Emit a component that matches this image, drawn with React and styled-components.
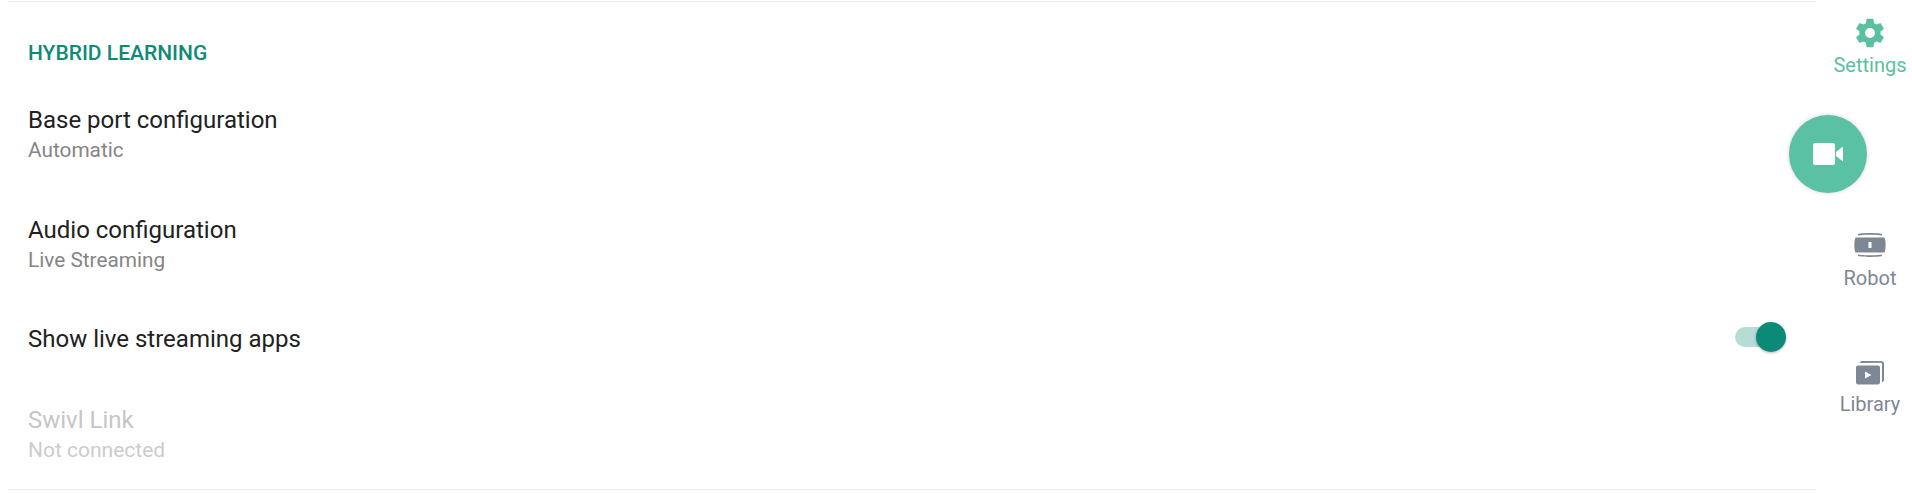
import React from 'react';
import styled, { createGlobalStyle } from 'styled-components';

const Global = createGlobalStyle`
  html, body { margin: 0; padding: 0; background: #fff; height: 493px; overflow: hidden; }
  * { box-sizing: border-box; }
  body { font-family: Roboto, "Noto Sans", sans-serif; }
`;

const Page = styled.div`
  display: flex;
  width: 1912px;
  height: 493px;
  position: relative;
  background: #fff;
`;

const Panel = styled.main`
  width: 1808px;
  height: 489px;
  margin-left: 8px;
  margin-top: 1px;
  padding: 0 20px;
  border-top: 1px solid #ececec;
  border-bottom: 1px solid #ececec;
  display: flex;
  flex-direction: column;
  flex-shrink: 0;
`;

const Heading = styled.h2`
  margin: 39px 0 14px;
  font-size: 21px;
  line-height: 24px;
  font-weight: 500;
  color: #0f8a75;
`;

const Row = styled.div`
  height: ${p => p.$h}px;
  padding-top: ${p => p.$pt || 0}px;
  display: flex;
  align-items: center;
  justify-content: space-between;
  flex-shrink: 0;
`;

const Texts = styled.div`
  display: flex;
  flex-direction: column;
`;

const Title = styled.div`
  font-size: 24px;
  line-height: 32px;
  color: ${p => (p.$off ? '#c6c6c6' : '#212121')};
`;

const Sub = styled.div`
  font-size: ${p => (p.$off ? '21px' : '20.8px')};
  line-height: 29px;
  color: ${p => (p.$off ? '#cccccc' : '#858585')};
`;

const Track = styled.div`
  position: relative;
  width: 45px;
  height: 20px;
  margin-right: 16px;
  margin-bottom: 3px;
  border-radius: 10px;
  background: #b5dcd5;
`;

const Knob = styled.div`
  position: absolute;
  right: -6px;
  top: -5px;
  width: 30px;
  height: 30px;
  border-radius: 50%;
  background: #0b8a78;
  box-shadow: 0 1px 3px rgba(0,0,0,.28);
`;

const Rail = styled.nav`
  width: 96px;
  height: 100%;
  padding-left: 12px;
  display: flex;
  flex-direction: column;
  align-items: center;
  flex-shrink: 0;
`;

const NavItem = styled.div`
  display: flex;
  flex-direction: column;
  align-items: center;
  height: ${p => p.$h}px;
  margin-top: ${p => p.$mt}px;
  gap: ${p => p.$gap}px;
  color: ${p => (p.$active ? '#5bc0a3' : '#7e8794')};
  font-size: 20px;
  line-height: 24px;
`;

const IconBox = styled.svg`
  width: 34px;
  height: 34px;
  display: block;
  flex-shrink: 0;
`;

const Fab = styled.button`
  position: absolute;
  left: 1789px;
  top: 115px;
  width: 78px;
  height: 78px;
  border: 0;
  padding: 0;
  border-radius: 50%;
  background: #5ac1a4;
  box-shadow: 0 0 4px rgba(0,0,0,.18);
  display: flex;
  align-items: center;
  justify-content: center;
`;

const Gear = () => (
  <IconBox viewBox="0 0 24 24" fill="currentColor">
    <path fillRule="evenodd" d="M19.4 13c.04-.32.07-.66.07-1s-.03-.68-.07-1l2.1-1.65c.2-.15.25-.42.12-.64l-2-3.46c-.12-.22-.39-.3-.6-.22l-2.5 1c-.52-.4-1.08-.73-1.7-.98l-.37-2.65A.49.49 0 0 0 14 2h-4c-.25 0-.46.18-.49.42L9.13 5.07c-.62.25-1.18.59-1.7.98l-2.48-1a.5.5 0 0 0-.61.22l-2 3.46c-.13.22-.07.49.12.64L4.57 11c-.04.32-.07.66-.07 1s.03.68.07 1l-2.11 1.65c-.19.15-.25.42-.12.64l2 3.46c.12.22.39.3.6.22l2.5-1c.52.4 1.08.73 1.7.98l.37 2.65c.04.24.25.42.49.42h4c.25 0 .46-.18.49-.42l.37-2.65c.62-.25 1.18-.59 1.7-.98l2.49 1c.22.08.49 0 .61-.22l2-3.46c.12-.22.07-.49-.12-.64L19.4 13zM12 15.500a3.5 3.5 0 1 1 0-7 3.5 3.5 0 0 1 0 7z" />
  </IconBox>
);

const RobotIcon = () => (
  <IconBox viewBox="0 0 34 34" fill="currentColor">
    <path d="M5 6C9 4.800 25 4.800 29 6L29 7.500C25 6.400 9 6.400 5 7.500Z" />
    <path fillRule="evenodd" d="M2.500 9.500H31.500C33 13 33 21 31.500 24.500H2.500C1 21 1 13 2.500 9.500ZM15.500 14V20H18.500V14Z" />
    <path d="M5 26.500C9 27.600 25 27.600 29 26.500L29 28C25 29.200 9 29.200 5 28Z" />
  </IconBox>
);

const LibraryIcon = () => (
  <IconBox viewBox="0 0 34 34" fill="currentColor">
    <path fillRule="evenodd" d="M5 9.500H25a2 2 0 0 1 2 2V26.500a2 2 0 0 1-2 2H5a2 2 0 0 1-2-2V11.500a2 2 0 0 1 2-2ZM12 15.500V22.500L18.500 19Z" />
    <path d="M7 7a2 2 0 0 1 2-2H28a3 3 0 0 1 3 3V24a2 2 0 0 1-2 2V8a1.300 1.300 0 0 0-1.300-1.300Z" />
  </IconBox>
);

const Video = () => (
  <svg width="38" height="38" viewBox="0 0 38 38" fill="#fff">
    <path d="M6 8H24a2 2 0 0 1 2 2V28a2 2 0 0 1-2 2H6a2 2 0 0 1-2-2V10a2 2 0 0 1 2-2Z" />
    <path d="M27 17L34 11.500V26.500L27 21Z" />
  </svg>
);

export default function App() {
  return (
    <Page>
      <Global />
      <Panel>
        <Heading>HYBRID LEARNING</Heading>
        <Row $h={110}>
          <Texts>
            <Title>Base port configuration</Title>
            <Sub>Automatic</Sub>
          </Texts>
        </Row>
        <Row $h={110}>
          <Texts>
            <Title>Audio configuration</Title>
            <Sub>Live Streaming</Sub>
          </Texts>
        </Row>
        <Row $h={79}>
          <Texts>
            <Title>Show live streaming apps</Title>
          </Texts>
          <Track><Knob /></Track>
        </Row>
        <Row $h={110} $pt={2}>
          <Texts>
            <Title $off>Swivl Link</Title>
            <Sub $off>Not connected</Sub>
          </Texts>
        </Row>
      </Panel>
      <Rail>
        <NavItem $active $mt={16} $h={212} $gap={3}>
          <Gear />
          Settings
        </NavItem>
        <NavItem $mt={0} $h={128} $gap={4}>
          <RobotIcon />
          Robot
        </NavItem>
        <NavItem $mt={0} $h={100} $gap={2}>
          <LibraryIcon />
          Library
        </NavItem>
      </Rail>
      <Fab aria-label="Record"><Video /></Fab>
    </Page>
  );
}
